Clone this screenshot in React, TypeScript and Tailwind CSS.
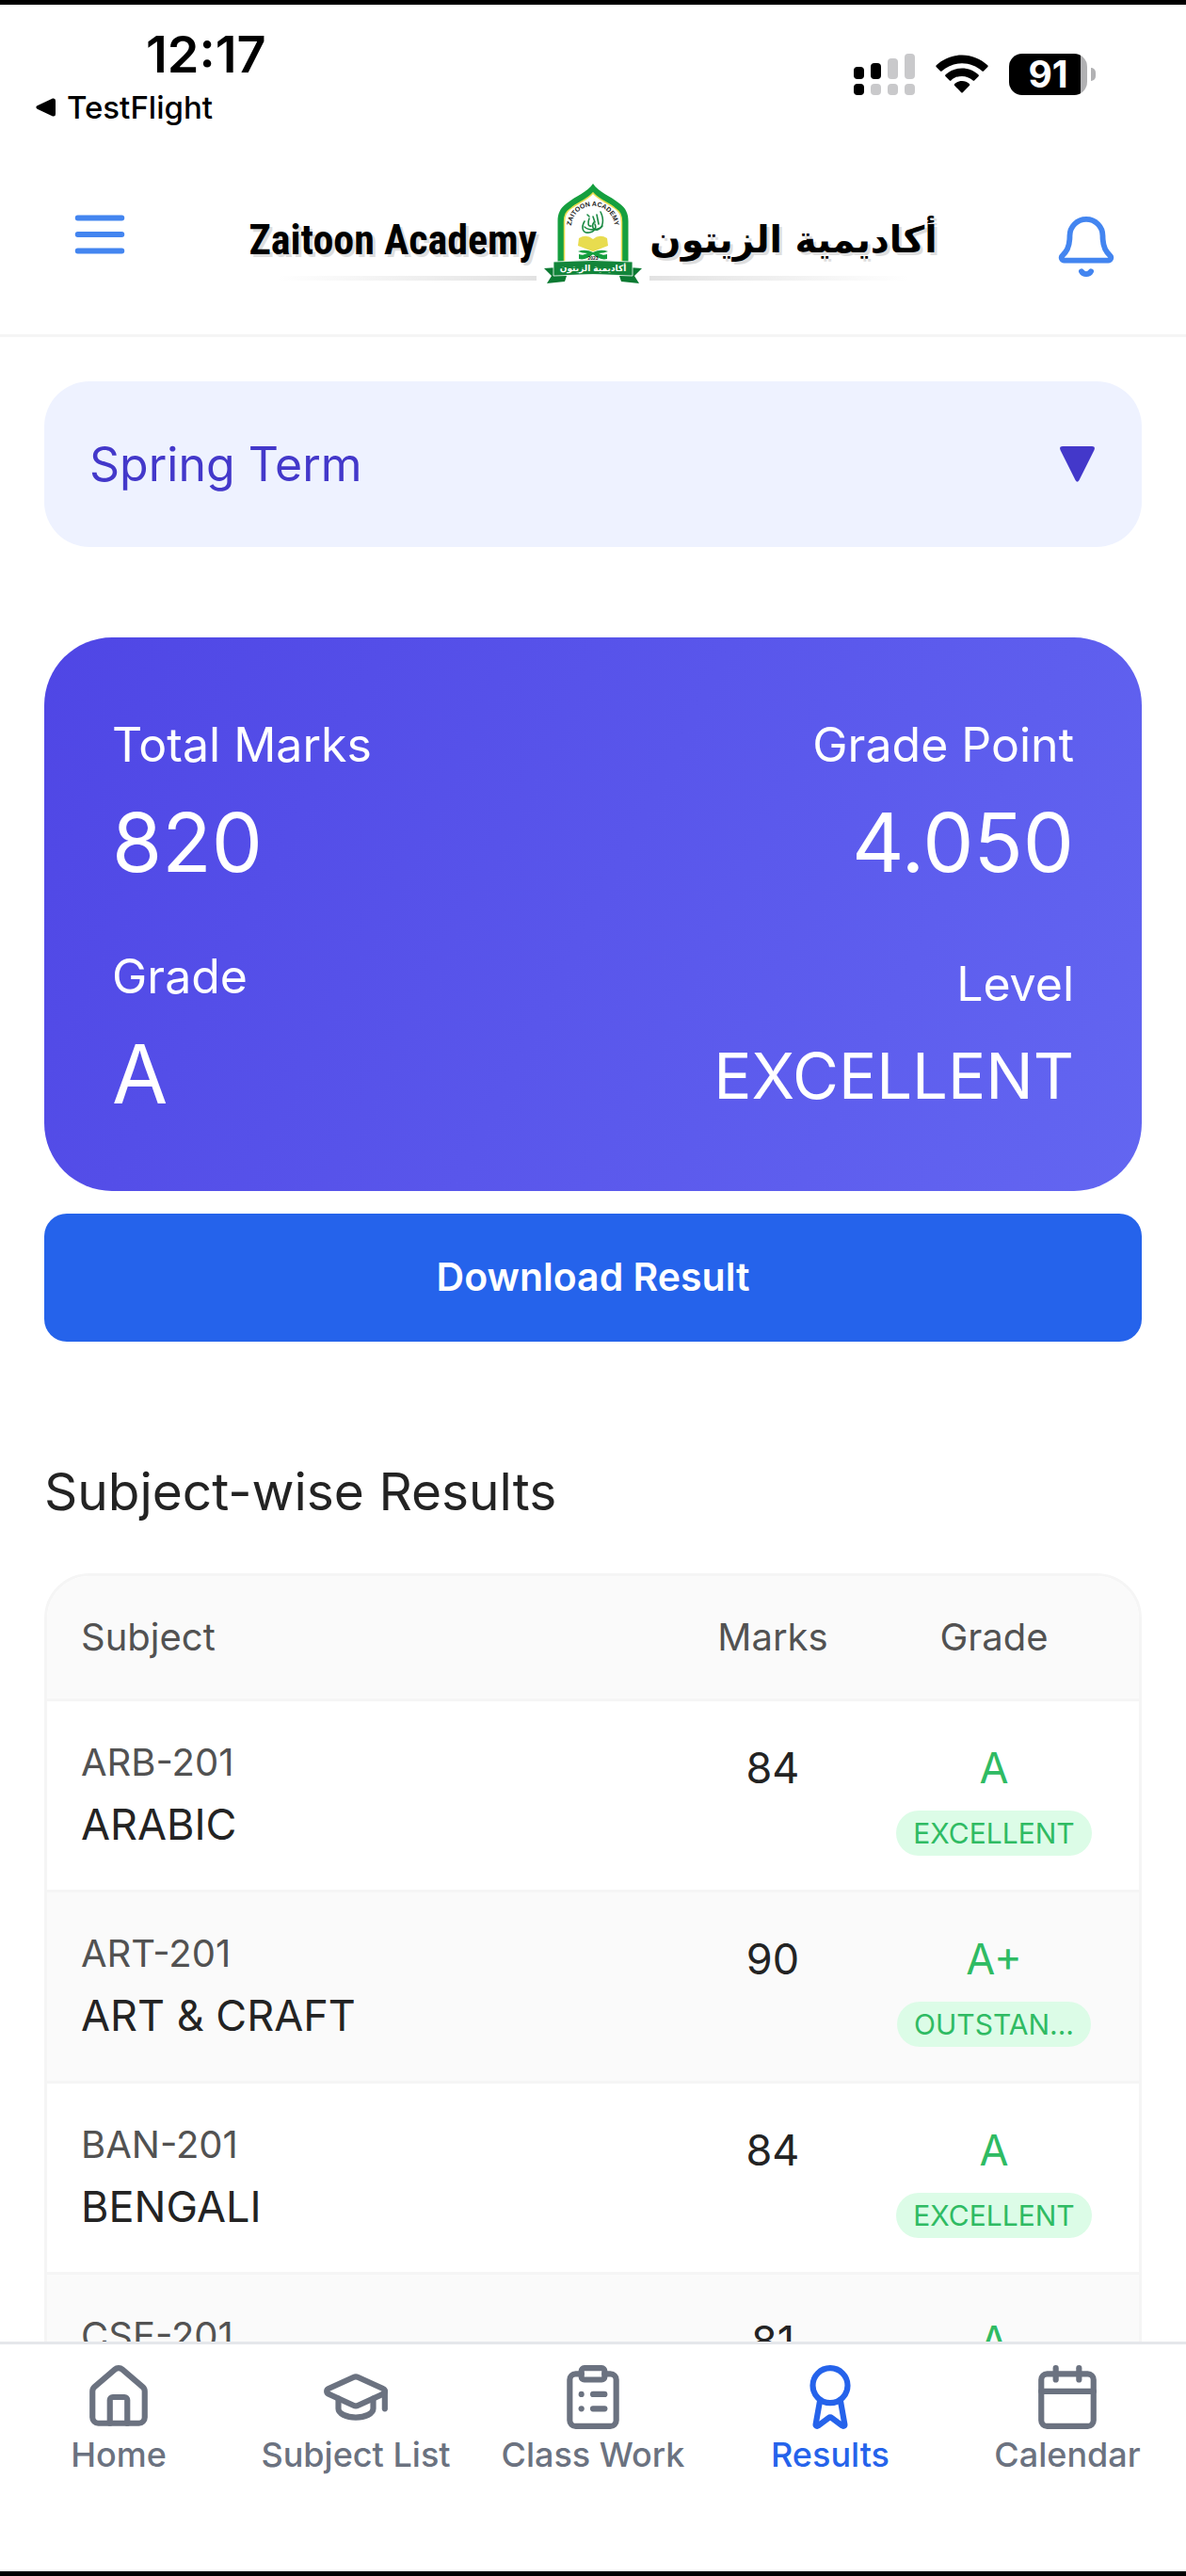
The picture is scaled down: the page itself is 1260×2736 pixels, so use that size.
import { useState } from 'react';
import { Award, Bell, Calendar, ClipboardList, GraduationCap, House } from 'lucide-react';
import { clsx } from 'clsx';

const TERMS = ['Spring Term', 'Summer Term', 'Autumn Term'];

const RESULTS = [
  { code: 'ARB-201', name: 'ARABIC', marks: 84, grade: 'A', level: 'EXCELLENT' },
  { code: 'ART-201', name: 'ART & CRAFT', marks: 90, grade: 'A+', level: 'OUTSTANDING' },
  { code: 'BAN-201', name: 'BENGALI', marks: 84, grade: 'A', level: 'EXCELLENT' },
  { code: 'CSE-201', name: 'COMPUTER', marks: 81, grade: 'A', level: 'EXCELLENT' },
];

const TABS = [
  { label: 'Home', icon: House },
  { label: 'Subject List', icon: GraduationCap },
  { label: 'Class Work', icon: ClipboardList },
  { label: 'Results', icon: Award },
  { label: 'Calendar', icon: Calendar },
];

// badges only have room for about nine capitals
function shortLevel(level: string) {
  return level.length > 9 ? `${level.slice(0, 7)}...` : level;
}

function StatusBar() {
  return (
    <div className="flex items-start justify-between pt-[21px] pr-24 pl-[38px] text-black">
      <div className="flex flex-col">
        <span className="pl-[117px] text-[54px] leading-[64px] font-semibold">12:17</span>
        <a href="#testflight" className="flex items-center gap-3 text-[33px] leading-[48px] font-medium">
          <svg className="h-5 w-[21px]" viewBox="0 0 21 20">
            <path d="M1.500 8.300 L18 .6 Q21 0 21 3 V17 Q21 20 18 19.400 L1.500 11.700 Q-.8 10 1.500 8.300Z" fill="#000" />
          </svg>
          TestFlight
        </a>
      </div>

      <div className="flex items-center gap-[22px] pt-[31px]">
        <svg className="h-11 w-[65px]" viewBox="0 0 65 44">
          <g fill="#000">
            <rect x="0" y="14" width="11" height="13" rx="4" />
            <rect x="18" y="10" width="11" height="17" rx="4" />
            <rect x="0" y="32" width="11" height="12" rx="4" />
          </g>
          <g fill="#c9c9cb">
            <rect x="36" y="5" width="11" height="22" rx="4" />
            <rect x="54" y="0" width="11" height="27" rx="4" />
            <rect x="18" y="32" width="11" height="12" rx="4" />
            <rect x="36" y="32" width="11" height="12" rx="4" />
            <rect x="54" y="32" width="11" height="12" rx="4" />
          </g>
        </svg>
        <svg className="h-11 w-14" viewBox="0 0 56 44">
          <path d="M28 1.500C17.500 1.500 8 5.600 .8 12.300q-1 1 0 2l4 4q1 1 2 0C12.500 13.200 19.900 10.200 28 10.200s15.500 3 21.200 8.100q1 1 2 0l4-4q1-1 0-2C48 5.600 38.500 1.500 28 1.500z" />
          <path d="M28 15.400c-6.700 0-12.800 2.600-17.400 6.800q-1 1 0 2l4 4q1 1 2 0c3-2.700 7-4.300 11.400-4.300s8.400 1.600 11.400 4.300q1 1 2 0l4-4q1-1 0-2C40.800 18 34.700 15.400 28 15.400z" />
          <path d="M28 29c-3 0-5.700 1.100-7.800 2.900q-1 1 0 2l6.800 7.200q1 1 2 0l6.800-7.200q1-1 0-2C33.700 30.100 31 29 28 29z" />
        </svg>
        <div className="flex items-center gap-1">
          <div className="flex h-11 w-[83px] items-center justify-center rounded-[14px] bg-linear-to-r from-black from-91% to-[#b1b1b3] to-91% text-[39px] leading-[44px] font-bold text-white">
            91
          </div>
          <div className="h-[14px] w-[5px] rounded-r-full bg-[#b1b1b3]" />
        </div>
      </div>
    </div>
  );
}

function Crest() {
  return (
    <svg className="h-[107px] w-[104px]" viewBox="0 0 104 107">
      <path d="M52 0C58 9 70 13 80 21C87 26 89.500 32 89.500 40V90H14.500V40C14.500 32 17 26 24 21C34 13 46 9 52 0Z" fill="#159f3f" />
      <path d="M52 10C58 17 67 20 75 26C81 30 82.500 34 82.500 41V90H21.500V41C21.500 34 23 30 29 26C37 20 46 17 52 10Z" fill="#fff" stroke="#e8dc4f" strokeWidth="1.500" />
      <path id="crest-arc" d="M28.500 50C28 15 76 15 75.500 50" fill="none" />
      <text fontFamily="Liberation Sans" fontSize="7" fontWeight="700" fill="#222">
        <textPath href="#crest-arc" startOffset="50%" textAnchor="middle">ZAITOON ACADEMY</textPath>
      </text>
      <g fill="none" stroke="#1b8a43" strokeWidth="1.600" strokeLinecap="round">
        <path d="M43 40C39 47 41 53 48 52C54 51 56 47 54 43M60 30C64 38 63 47 57 49C52 50 50 45 53 41" />
        <path d="M48 37C46 42 47 46 50 45M56 33L58 43M52 35L54 41M43 46C47 50 58 50 62 45M46 33l2 2" />
      </g>
      <path d="M37 58Q45 53 52 59Q59 53 67 58L68 66L55 71Q52 73 49 71L36 66Z" fill="#e8dc4f" />
      <g fill="#159f3f">
        <path d="M36 72Q44 69 52 73Q61 77 67 75V80Q58 80 52 75Q44 82 37 80Q39 76 46 74Q40 74 36 72Z" />
        <path d="M68 72Q60 69 52 73Q43 77 37 75V80Q46 80 52 75Q60 82 67 80Q65 76 58 74Q64 74 68 72Z" />
      </g>
      <text x="52" y="81" textAnchor="middle" fontFamily="Liberation Sans" fontSize="5" fontWeight="700" fill="#111">2023</text>
      <path d="M0 90L14 89L24 98L22 104L3 106L8 98Z" fill="#0b7a32" />
      <path d="M104 90L90 89L80 98L82 104L101 106L96 98Z" fill="#0b7a32" />
      <path d="M10 83Q52 80 94 83V98Q52 95 10 98Z" fill="#12853a" stroke="#fff" strokeWidth=".8" />
      <text x="52" y="93" textAnchor="middle" fontFamily="DejaVu Sans" fontSize="9" fontWeight="700" fill="#fff">أكاديمية الزيتون</text>
    </svg>
  );
}

function Logo() {
  return (
    <div className="flex items-end gap-2 text-black">
      <div className="flex flex-col items-end gap-2 pb-1">
        <span className="font-['Roboto_Condensed','Roboto',sans-serif] text-[44px] leading-[60px] font-bold whitespace-nowrap [text-shadow:3px_3px_0_#dedede]">
          Zaitoon Academy
        </span>
        <div className="h-[5px] w-[275px] bg-linear-to-l from-[#e2e2e2] to-white" />
      </div>
      <Crest />
      <div className="flex flex-col items-start gap-2 pb-1">
        <span
          dir="rtl"
          lang="ar"
          className="font-['DejaVu_Sans',sans-serif] text-[39px] leading-[60px] font-bold whitespace-nowrap [text-shadow:3px_3px_0_#dedede]"
        >
          أكاديمية الزيتون
        </span>
        <div className="h-[5px] w-[275px] bg-linear-to-r from-[#e2e2e2] to-white" />
      </div>
    </div>
  );
}

function Header() {
  return (
    <header className="flex h-[220px] items-center justify-between border-b-3 border-[#f5f5f5] px-[71px] pt-1 text-[#4385f0]">
      <button aria-label="Open menu">
        <svg className="size-[70px]" viewBox="0 0 24 24" fill="none" stroke="currentColor" strokeWidth="2" strokeLinecap="round">
          <path d="M4 6h16M4 12h16M4 18h16" />
        </svg>
      </button>
      <Logo />
      <button aria-label="Notifications" className="pt-[26px]">
        <Bell className="size-[70px]" />
      </button>
    </header>
  );
}

function TermSelect() {
  const [term, setTerm] = useState(TERMS[0]);

  return (
    <div className="relative">
      <select
        aria-label="Term"
        value={term}
        onChange={(e) => setTerm(e.target.value)}
        className="h-44 w-full appearance-none rounded-[48px] bg-[#eef2ff] px-12 text-[50px] text-[#4338ca]"
      >
        {TERMS.map((t) => (
          <option key={t}>{t}</option>
        ))}
      </select>
      <div className="pointer-events-none absolute inset-y-0 right-[50px] flex items-center">
        <svg className="h-[38px] w-[37px]" viewBox="0 0 37 38">
          <path d="M3 0H34Q38 0 36.500 4L20.500 36Q18.500 39.500 16.500 36L.5 4Q-1 0 3 0Z" fill="#4338ca" />
        </svg>
      </div>
    </div>
  );
}

function Summary() {
  return (
    <section className="mt-24 flex justify-between rounded-[72px] bg-linear-[117deg] from-[#4f46e5] to-[#6366f1] px-[72px] pt-[74px] pb-[72px] text-[50px] leading-[80px] text-white">
      <div className="flex flex-col gap-[50px]">
        <div className="flex flex-col gap-3">
          <span>Total Marks</span>
          <span className="text-[86px] leading-[104px]">820</span>
        </div>
        <div className="flex flex-col gap-3">
          <span>Grade</span>
          <span className="text-[86px] leading-[104px]">A</span>
        </div>
      </div>
      <div className="flex flex-col justify-between text-right">
        <div className="flex flex-col gap-3">
          <span>Grade Point</span>
          <span className="text-[86px] leading-[104px]">4.050</span>
        </div>
        <div className="flex flex-col gap-2">
          <span>Level</span>
          <span className="text-[67px] leading-[100px]">EXCELLENT</span>
        </div>
      </div>
    </section>
  );
}

function ResultsTable() {
  return (
    <div className="overflow-hidden rounded-[48px] border-3 border-[#f5f5f5]">
      <table className="w-full table-fixed border-separate border-spacing-0">
        <thead>
          <tr className="bg-[#fafafa] text-[40px] leading-[56px] text-[#525252]">
            <th className="border-b-3 border-[#f5f5f5] py-[37px] pl-9 text-left font-normal">Subject</th>
            <th className="w-[234px] border-b-3 border-[#f5f5f5] font-normal">Marks</th>
            <th className="w-[272px] border-b-3 border-[#f5f5f5] pr-9 font-normal">Grade</th>
          </tr>
        </thead>
        <tbody>
          {RESULTS.map((r) => (
            <tr key={r.code} className="align-top text-[45px] text-[#232323] even:bg-[#fafafa]">
              <td className="border-b-3 border-[#f5f5f5] py-9 pl-9">
                <p className="mb-1 text-[40px] leading-[58px] text-[#525252]">{r.code}</p>
                <p className="leading-[66px]">{r.name}</p>
              </td>
              <td className="border-b-3 border-[#f5f5f5] py-9 text-center leading-[70px]">{r.marks}</td>
              <td className="border-b-3 border-[#f5f5f5] py-9 pr-9 text-center text-[#2fbb63]">
                <p className="mb-[10px] leading-[70px]">{r.grade}</p>
                <p className="mx-auto w-fit rounded-full bg-[#dcfce7] px-[18px] text-[30px] leading-[48px]">
                  {shortLevel(r.level)}
                </p>
              </td>
            </tr>
          ))}
        </tbody>
      </table>
    </div>
  );
}

function TabBar() {
  const [active, setActive] = useState('Results');

  return (
    <nav className="grid h-[244px] shrink-0 grid-cols-5 items-start border-t-3 border-[#e5e7eb] bg-white pt-[19px]">
      {TABS.map(({ label, icon: Icon }) => (
        <button
          key={label}
          onClick={() => setActive(label)}
          className={clsx(
            'flex flex-col items-center text-[36px] leading-[48px] font-medium whitespace-nowrap',
            active === label ? 'text-[#2563eb]' : 'text-[#6b7280]',
          )}
        >
          <Icon className="size-[74px]" />
          {label}
        </button>
      ))}
    </nav>
  );
}

export default function App() {
  return (
    <div className="flex h-screen flex-col border-y-5 border-black bg-white font-['Inter',sans-serif]">
      <StatusBar />
      <Header />
      <main className="min-h-0 flex-1 overflow-y-auto px-[47px] pt-[47px] [scrollbar-width:none]">
        <TermSelect />
        <Summary />
        <button className="mt-6 h-[136px] w-full rounded-3xl bg-[#2563eb] text-[41px] font-semibold text-white">
          Download Result
        </button>
        <h2 className="mt-[117px] mb-[45px] text-[55px] leading-[84px] text-[#232323]">Subject-wise Results</h2>
        <ResultsTable />
      </main>
      <TabBar />
    </div>
  );
}
